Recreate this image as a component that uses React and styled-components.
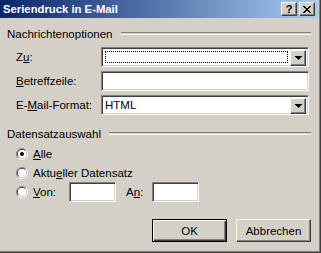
import styled, { createGlobalStyle } from 'styled-components';

const GlobalStyle = createGlobalStyle`
    body {
        margin: 0;
        background: #d4d0c8;
        font-family: 'Liberation Sans', Arial, sans-serif;
        font-size: 11.5px;
        color: #000;
    }
`;

const Window = styled.div`
    width: 321px;
    height: 253px;
    box-sizing: border-box;
    background: #d4d0c8;
    border-right: 1px solid #404040;
    border-bottom: 1px solid #404040;
    box-shadow: inset -1px -1px 0 #808080;
    display: flex;
    flex-direction: column;
    padding-right: 2px;
`;

const TitleBar = styled.div`
    height: 18px;
    display: flex;
    align-items: center;
    justify-content: space-between;
    padding: 0 3px 0 3px;
    background: linear-gradient(to right, #0a246a, #a6caf0);
`;

const Title = styled.div`
    color: #fff;
    font-weight: bold;
    font-size: 11.3px;
`;

const CaptionButtons = styled.div`
    display: flex;
    gap: 2px;
`;

const Raised = styled.div`
    box-sizing: border-box;
    background: #d4d0c8;
    border: 1px solid;
    border-color: #fff #404040 #404040 #fff;
    box-shadow: inset -1px -1px 0 #808080;
`;

const CaptionButton = styled(Raised)`
    width: 16px;
    height: 14px;
    display: flex;
    align-items: center;
    justify-content: center;
    font-weight: bold;
    font-size: 11px;
    line-height: 1;
`;

const Body = styled.div`
    flex: 1;
    display: flex;
    flex-direction: column;
    padding: 9px 7px 0 7px;
`;

const GroupHeader = styled.div`
    display: flex;
    align-items: center;
    gap: 8px;
    height: 13px;
    margin-top: ${p => p.$top || 0}px;
`;

const Etch = styled.div`
    flex: 1;
    height: 1px;
    border-top: 1px solid #808080;
    border-bottom: 1px solid #fff;
`;

const FieldGrid = styled.div`
    display: grid;
    grid-template-columns: 85px 208px;
    grid-auto-rows: 20px;
    row-gap: 4px;
    padding-left: 9px;
    margin-top: 7px;
    align-items: center;
`;

const Label = styled.span`
    white-space: nowrap;
`;

const Sunken = styled.div`
    box-sizing: border-box;
    background: #fff;
    border: 1px solid;
    border-color: #808080 #fff #fff #808080;
    box-shadow: inset 1px 1px 0 #404040, inset -1px -1px 0 #d4d0c8;
`;

const TextBox = styled(Sunken)`
    width: ${p => p.$width || 208}px;
    height: 20px;
`;

const Combo = styled(Sunken)`
    height: 20px;
    width: 208px;
    display: flex;
    padding: 2px;
`;

const ComboValue = styled.div`
    flex: 1;
    display: flex;
    align-items: center;
    padding-left: 1px;
`;

const FocusRect = styled.div`
    flex: 1;
    margin: 1px 2px 1px 1px;
    border: 1px dotted #000;
`;

const DropButton = styled(Raised)`
    width: 16px;
    height: 16px;
    display: flex;
    align-items: center;
    justify-content: center;
`;

const RadioList = styled.div`
    display: flex;
    flex-direction: column;
    padding-left: 9px;
    margin-top: 4px;
`;

const RadioRow = styled.div`
    display: flex;
    align-items: center;
    height: ${p => p.$h || 19}px;
`;

const RadioText = styled.span`
    margin-left: ${p => p.$ml || 5}px;
    width: ${p => (p.$w ? p.$w + 'px' : 'auto')};
`;

const ButtonRow = styled.div`
    display: flex;
    justify-content: flex-end;
    gap: 9px;
    margin-top: 17px;
`;

const PushButton = styled(Raised)`
    width: 75px;
    height: 23px;
    display: flex;
    align-items: center;
    justify-content: center;
    ${p => p.$default && `
        border: 1px solid #000;
        box-shadow: inset 1px 1px 0 #fff, inset -1px -1px 0 #404040, inset -2px -2px 0 #808080;
    `}
`;

const U = styled.span`
    text-decoration: underline;
    text-underline-offset: 1px;
`;

function Arrow() {
    return (
        <svg width="7" height="4" viewBox="0 0 7 4">
            <path d="M0 0h7v1H0zM1 1h5v1H1zM2 2h3v1H2zM3 3h1v1H3z" fill="#000" />
        </svg>
    );
}

function CloseGlyph() {
    return (
        <svg width="8" height="7" viewBox="0 0 8 7" shapeRendering="crispEdges">
            <path d="M0 0h2v1H0zM6 0h2v1H6zM1 1h2v1H1zM5 1h2v1H5zM2 2h4v1H2zM3 3h2v1H3zM2 4h4v1H2zM1 5h2v1H1zM5 5h2v1H5zM0 6h2v1H0zM6 6h2v1H6z" fill="#000" />
        </svg>
    );
}

function Radio({ checked }) {
    return (
        <svg width="12" height="12" viewBox="0 0 12 12">
            <path d="M2.1 9.9A5.5 5.5 0 0 1 9.9 2.1" stroke="#808080" fill="none" />
            <path d="M2.1 9.9A5.5 5.5 0 0 0 9.9 2.1" stroke="#fff" fill="none" />
            <path d="M2.8 9.2A4.5 4.5 0 0 1 9.2 2.8" stroke="#404040" fill="none" />
            <path d="M2.8 9.2A4.5 4.5 0 0 0 9.2 2.8" stroke="#d4d0c8" fill="none" />
            <circle cx="6" cy="6" r="4" fill="#fff" />
            {checked && <circle cx="6" cy="6" r="2" fill="#000" />}
        </svg>
    );
}

export default function App() {
    return (
        <>
            <GlobalStyle />
            <Window>
                <TitleBar>
                    <Title>Seriendruck in E-Mail</Title>
                    <CaptionButtons>
                        <CaptionButton>?</CaptionButton>
                        <CaptionButton><CloseGlyph /></CaptionButton>
                    </CaptionButtons>
                </TitleBar>
                <Body>
                    <GroupHeader>
                        <span>Nachrichtenoptionen</span>
                        <Etch />
                    </GroupHeader>
                    <FieldGrid>
                        <Label>Z<U>u</U>:</Label>
                        <Combo>
                            <FocusRect />
                            <DropButton><Arrow /></DropButton>
                        </Combo>
                        <Label><U>B</U>etreffzeile:</Label>
                        <TextBox />
                        <Label>E-<U>M</U>ail-Format:</Label>
                        <Combo>
                            <ComboValue>HTML</ComboValue>
                            <DropButton><Arrow /></DropButton>
                        </Combo>
                    </FieldGrid>
                    <GroupHeader $top={12}>
                        <span>Datensatzauswahl</span>
                        <Etch />
                    </GroupHeader>
                    <RadioList>
                        <RadioRow>
                            <Radio checked />
                            <RadioText><U>A</U>lle</RadioText>
                        </RadioRow>
                        <RadioRow>
                            <Radio />
                            <RadioText>Aktu<U>e</U>ller Datensatz</RadioText>
                        </RadioRow>
                        <RadioRow $h={20}>
                            <Radio />
                            <RadioText $w={36}><U>V</U>on:</RadioText>
                            <TextBox $width={47} />
                            <RadioText $w={26} $ml={10}>A<U>n</U>:</RadioText>
                            <TextBox $width={47} />
                        </RadioRow>
                    </RadioList>
                    <ButtonRow>
                        <PushButton $default>OK</PushButton>
                        <PushButton>Abbrechen</PushButton>
                    </ButtonRow>
                </Body>
            </Window>
        </>
    );
}
